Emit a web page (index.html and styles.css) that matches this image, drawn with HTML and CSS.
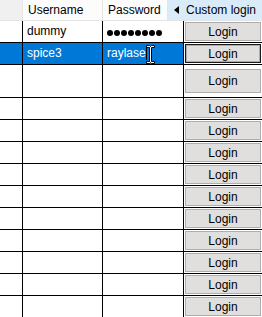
FILE: index.html
```html
<!DOCTYPE html>
<html lang="en">
<head>
  <meta charset="UTF-8" />
  <title>Logins</title>
  <link rel="stylesheet" href="styles.css">
</head>
<body>
  <div class="grid">
    <div class="head">
      <div class="hcell corner"></div>
      <div class="hcell">Username</div>
      <div class="hcell">Password</div>
      <div class="hcell custom">
        <svg class="arrow" width="5" height="8" viewBox="0 0 5 8"><polygon points="5,0 5,8 0,4" fill="#000"/></svg>Custom login
      </div>
    </div>

    <div class="row">
      <div class="cell"></div>
      <div class="cell">dummy</div>
      <div class="cell"><span class="dots"><i></i><i></i><i></i><i></i><i></i><i></i><i></i><i></i></span></div>
      <div class="btn-cell"><button>Login</button></div>
    </div>

    <div class="row sel">
      <div class="cell"></div>
      <div class="cell">spice3</div>
      <div class="cell edit">raylase<span class="caret"></span>
        <svg class="ibeam" width="9" height="19" viewBox="0 0 9 19">
          <polygon points="0.5,0.5 3.5,0.5 4.5,1.5 5.5,0.5 8.5,0.5 8.5,2.5 5.5,2.5 5.5,16.5 8.5,16.5 8.5,18.5 5.5,18.5 4.5,17.5 3.5,18.5 0.5,18.5 0.5,16.5 3.5,16.5 3.5,2.5 0.5,2.5" fill="#fff" stroke="#000" stroke-width="1"/>
        </svg>
      </div>
      <div class="btn-cell"><button class="focus">Login</button></div>
    </div>

    <div class="row tall">
      <div class="cell"></div><div class="cell"></div><div class="cell"></div>
      <div class="btn-cell"><button>Login</button></div>
    </div>

    <div class="row"><div class="cell"></div><div class="cell"></div><div class="cell"></div><div class="btn-cell"><button>Login</button></div></div>
    <div class="row"><div class="cell"></div><div class="cell"></div><div class="cell"></div><div class="btn-cell"><button>Login</button></div></div>
    <div class="row"><div class="cell"></div><div class="cell"></div><div class="cell"></div><div class="btn-cell"><button>Login</button></div></div>
    <div class="row"><div class="cell"></div><div class="cell"></div><div class="cell"></div><div class="btn-cell"><button>Login</button></div></div>
    <div class="row"><div class="cell"></div><div class="cell"></div><div class="cell"></div><div class="btn-cell"><button>Login</button></div></div>
    <div class="row"><div class="cell"></div><div class="cell"></div><div class="cell"></div><div class="btn-cell"><button>Login</button></div></div>
    <div class="row"><div class="cell"></div><div class="cell"></div><div class="cell"></div><div class="btn-cell"><button>Login</button></div></div>
    <div class="row"><div class="cell"></div><div class="cell"></div><div class="cell"></div><div class="btn-cell"><button>Login</button></div></div>
    <div class="row"><div class="cell"></div><div class="cell"></div><div class="cell"></div><div class="btn-cell"><button>Login</button></div></div>
    <div class="row"><div class="cell"></div><div class="cell"></div><div class="cell"></div><div class="btn-cell"><button>Login</button></div></div>
  </div>
</body>
</html>
```

FILE: styles.css
```css
body {
  margin: 0;
  background: #fff;
  font-family: "Liberation Sans", Arial, sans-serif;
  font-size: 12px;
  color: #000;
  overflow: hidden;
}
.grid {
  width: 262px;
}
.head {
  display: grid;
  grid-template-columns: 23px 80px 65px 1fr;
  height: 21px;
  border-bottom: 1px solid #e5e5e5;
  box-sizing: border-box;
}
.hcell {
  background: #fcfcfc;
  border-right: 1px solid #e5e5e5;
  padding-left: 5px;
  line-height: 20px;
  white-space: nowrap;
  overflow: hidden;
}
.corner {
  background: #f0f0f0;
}
.custom {
  background: #d9ebf9;
  border-right: none;
  padding-left: 6px;
  display: flex;
  align-items: center;
}
.arrow {
  margin-right: 7px;
}
.row {
  display: grid;
  grid-template-columns: 23px 80px 81px 1fr;
  height: 22px;
  border-bottom: 1px solid #000;
  box-sizing: border-box;
}
.row.tall {
  height: 33px;
}
.cell {
  border-right: 1px solid #000;
  padding-left: 4px;
  line-height: 21px;
  white-space: nowrap;
}
.sel .cell {
  background: #0078d7;
  color: #fff;
}
.edit {
  position: relative;
}
.caret {
  display: inline-block;
  width: 1px;
  height: 14px;
  background: #000;
  vertical-align: -3px;
}
.ibeam {
  position: absolute;
  left: 43px;
  top: 2px;
}
.dots {
  display: inline-flex;
  gap: 1px;
  vertical-align: -1px;
}
.dots i {
  width: 6px;
  height: 6px;
  border-radius: 50%;
  background: #000;
}
.btn-cell {
  display: flex;
  align-items: center;
  padding-left: 1px;
}
button {
  width: 76px;
  height: 19px;
  padding: 0;
  border: 1px solid #adadad;
  background: #e1dfdd;
  font-family: "Liberation Sans", Arial, sans-serif;
  font-size: 12px;
  color: #000;
}
.tall button {
  height: 24px;
}
button.focus {
  border-color: #1a1a1a;
  box-shadow: inset 0 0 0 1px #adadad;
}
```
